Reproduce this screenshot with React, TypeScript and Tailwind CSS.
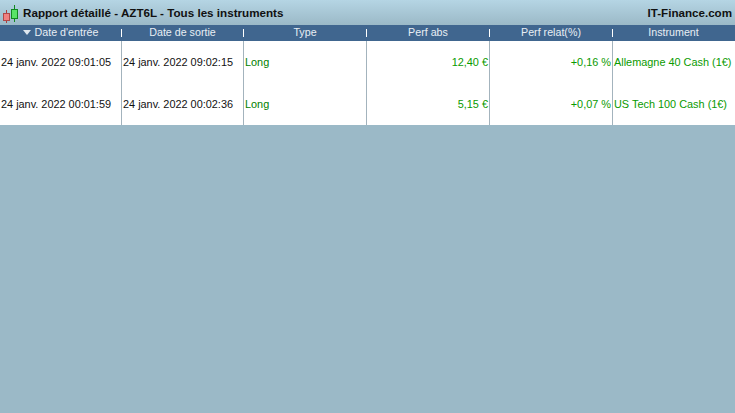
const columns = [
  { label: "Date d'entrée", w: "w-[122px]", sort: true },
  { label: "Date de sortie", w: "w-[122px]" },
  { label: "Type", w: "w-[123px]" },
  { label: "Perf abs", w: "w-[123px]" },
  { label: "Perf relat(%)", w: "w-[123px]" },
  { label: "Instrument", w: "w-[122px]" },
];

const rows = [
  ["24 janv. 2022 09:01:05", "24 janv. 2022 09:02:15", "Long", "12,40 €", "+0,16 %", "Allemagne 40 Cash (1€)"],
  ["24 janv. 2022 00:01:59", "24 janv. 2022 00:02:36", "Long", "5,15 €", "+0,07 %", "US Tech 100 Cash (1€)"],
];

function Logo() {
  return (
    <svg width="16" height="21" viewBox="0 0 16 21" className="shrink-0">
      <line x1="3.5" y1="8" x2="3.5" y2="21" stroke="#a84040" />
      <rect x="0.5" y="11.5" width="6" height="7" fill="#f08080" stroke="#b04848" />
      <line x1="11.5" y1="3" x2="11.5" y2="20" stroke="#108a20" />
      <rect x="8.5" y="7.5" width="6" height="9" fill="#58e468" stroke="#108a20" />
    </svg>
  );
}

export default function App() {
  return (
    <div className="w-[735px] h-[413px] overflow-hidden bg-[#9bb9c7] font-['Liberation_Sans',Arial,sans-serif]">
      <div className="h-[25px] flex items-center justify-between pr-[3px] pl-[3px] bg-gradient-to-b from-[#b5d5e4] to-[#9bb9c7]">
        <div className="flex items-center gap-[4px]">
          <Logo />
          <span className="text-[11.65px] font-bold text-[#111]">Rapport détaillé - AZT6L - Tous les instruments</span>
        </div>
        <span className="text-[11.6px] font-bold text-[#111]">IT-Finance.com</span>
      </div>
      <div className="flex h-[16px] bg-[#40668f]">
        {columns.map((c, i) => (
          <div key={c.label} className={`${c.w} relative flex items-center justify-center gap-[4px] pb-[2px] pr-[1px] text-[10.7px] leading-none text-[#e8eef4]`}>
            {c.sort && (
              <svg width="8" height="5" viewBox="0 0 8 5" className="mt-[1px]">
                <path d="M0 0h8L4 5z" fill="#dfe7ef" />
              </svg>
            )}
            <span>{c.label}</span>
            {i < 5 && <span className="absolute right-0 top-[4px] h-[8px] w-px bg-white" />}
          </div>
        ))}
      </div>
      <div className="bg-white">
        {rows.map((r) => (
          <div key={r[0]} className="flex h-[42px]">
            {r.map((v, i) => (
              <div
                key={i}
                className={`${columns[i].w} flex items-center px-[1px] text-[10.9px] ${i < 5 ? "border-r border-[#a3b3bd]" : ""} ${i === 3 || i === 4 ? "justify-end" : ""} ${i < 2 ? "text-[#111]" : i === 2 ? "text-[#008000]" : "text-[#0a9a00]"}`}
              >
                <span className="whitespace-nowrap">{v}</span>
              </div>
            ))}
          </div>
        ))}
      </div>
    </div>
  );
}
